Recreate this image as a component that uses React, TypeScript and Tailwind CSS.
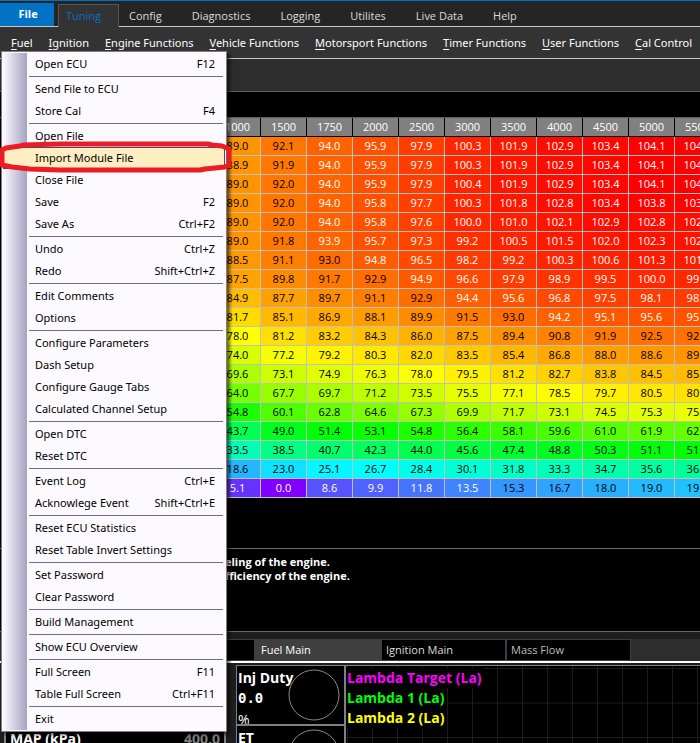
import React from "react";

const navTabs = ["Config", "Diagnostics", "Logging", "Utilites", "Live Data", "Help"];

const menuBar = [
  "Fuel",
  "Ignition",
  "Engine Functions",
  "Vehicle Functions",
  "Motorsport Functions",
  "Timer Functions",
  "User Functions",
  "Cal Control",
];

type Item = { label: string; keys?: string; active?: boolean };

const fileMenu: Item[][] = [
  [{ label: "Open ECU", keys: "F12" }],
  [{ label: "Send File to ECU" }, { label: "Store Cal", keys: "F4" }],
  [
    { label: "Open File" },
    { label: "Import Module File", active: true },
    { label: "Close File" },
    { label: "Save", keys: "F2" },
    { label: "Save As", keys: "Ctrl+F2" },
  ],
  [
    { label: "Undo", keys: "Ctrl+Z" },
    { label: "Redo", keys: "Shift+Ctrl+Z" },
  ],
  [{ label: "Edit Comments" }, { label: "Options" }],
  [
    { label: "Configure Parameters" },
    { label: "Dash Setup" },
    { label: "Configure Gauge Tabs" },
    { label: "Calculated Channel Setup" },
  ],
  [{ label: "Open DTC" }, { label: "Reset DTC" }],
  [
    { label: "Event Log", keys: "Ctrl+E" },
    { label: "Acknowlege Event", keys: "Shift+Ctrl+E" },
  ],
  [{ label: "Reset ECU Statistics" }, { label: "Reset Table Invert Settings" }],
  [{ label: "Set Password" }, { label: "Clear Password" }],
  [{ label: "Build Management" }],
  [{ label: "Show ECU Overview" }],
  [
    { label: "Full Screen", keys: "F11" },
    { label: "Table Full Screen", keys: "Ctrl+F11" },
  ],
  [{ label: "Exit" }],
];

const rpm = [1000, 1500, 1750, 2000, 2500, 3000, 3500, 4000, 4500, 5000, 5500];

const fuel: number[][] = [
  [89.0, 92.1, 94.0, 95.9, 97.9, 100.3, 101.9, 102.9, 103.4, 104.1, 104.1],
  [88.9, 91.9, 94.0, 95.9, 97.9, 100.3, 101.9, 102.9, 103.4, 104.1, 104.1],
  [89.0, 92.0, 94.0, 95.9, 97.9, 100.4, 101.9, 102.9, 103.4, 104.1, 104.1],
  [89.0, 92.0, 94.0, 95.8, 97.7, 100.3, 101.8, 102.8, 103.4, 103.8, 103.8],
  [89.0, 92.0, 94.0, 95.8, 97.6, 100.0, 101.0, 102.1, 102.9, 102.8, 102.8],
  [89.0, 91.8, 93.9, 95.7, 97.3, 99.2, 100.5, 101.5, 102.0, 102.3, 102.3],
  [88.5, 91.1, 93.0, 94.8, 96.5, 98.2, 99.2, 100.3, 100.6, 101.3, 101.3],
  [87.5, 89.8, 91.7, 92.9, 94.9, 96.6, 97.9, 98.9, 99.5, 100.0, 99.9],
  [84.9, 87.7, 89.7, 91.1, 92.9, 94.4, 95.6, 96.8, 97.5, 98.1, 98.1],
  [81.7, 85.1, 86.9, 88.1, 89.9, 91.5, 93.0, 94.2, 95.1, 95.6, 95.6],
  [78.0, 81.2, 83.2, 84.3, 86.0, 87.5, 89.4, 90.8, 91.9, 92.5, 92.5],
  [74.0, 77.2, 79.2, 80.3, 82.0, 83.5, 85.4, 86.8, 88.0, 88.6, 89.0],
  [69.6, 73.1, 74.9, 76.3, 78.0, 79.5, 81.2, 82.7, 83.8, 84.5, 85.0],
  [64.0, 67.7, 69.7, 71.2, 73.5, 75.5, 77.1, 78.5, 79.7, 80.5, 80.9],
  [54.8, 60.1, 62.8, 64.6, 67.3, 69.9, 71.7, 73.1, 74.5, 75.3, 75.9],
  [43.7, 49.0, 51.4, 53.1, 54.8, 56.4, 58.1, 59.6, 61.0, 61.9, 62.5],
  [33.5, 38.5, 40.7, 42.3, 44.0, 45.6, 47.4, 48.8, 50.3, 51.1, 51.8],
  [18.6, 23.0, 25.1, 26.7, 28.4, 30.1, 31.8, 33.3, 34.7, 35.6, 36.2],
  [5.1, 0.0, 8.6, 9.9, 11.8, 13.5, 15.3, 16.7, 18.0, 19.0, 19.7],
];

const stops = [
  [128, 0, 255],
  [0, 255, 255],
  [0, 255, 0],
  [255, 255, 0],
  [255, 0, 0],
];

function heat(v: number) {
  const t = Math.min(3.999, (v / 104.1) * 4);
  const i = Math.floor(t);
  const c = stops[i].map((a, k) => Math.round(a + (stops[i + 1][k] - a) * (t - i)));
  return `rgb(${c[0]}, ${c[1]}, ${c[2]})`;
}

function FileMenu() {
  return (
    <div
      role="menu"
      aria-label="File"
      className="absolute left-px top-[51px] z-10 flex w-[226px] border border-[#8a7b80] bg-[#fcfaff] p-px font-['Noto_Sans',sans-serif] text-black shadow-[3px_3px_3px_rgba(0,0,0,0.55)]"
    >
      <div className="w-6 bg-linear-to-r from-[#fcfaff] to-[#a5a3c0]" />
      <div className="-ml-6 flex-1">
        {fileMenu.map((group, g) => (
          <React.Fragment key={g}>
            {g > 0 && <div role="separator" className="my-px ml-[26px] mr-0.5 h-px bg-[#6d6d96]" />}
            {group.map((item) => (
              <button
                key={item.label}
                type="button"
                role="menuitem"
                className={
                  "flex h-[22px] w-full items-center justify-between border pl-[31px] pr-[9px] " +
                  (item.active ? "border-[#4b4b6f] bg-[#ffeec2]" : "border-transparent")
                }
              >
                <span>{item.label}</span>
                <span>{item.keys}</span>
              </button>
            ))}
          </React.Fragment>
        ))}
      </div>
    </div>
  );
}

function FuelTable() {
  return (
    <div className="overflow-hidden border-t border-[#5e5e5e] pl-[215px]">
      <table className="w-[506px] table-fixed border-separate border-spacing-0 text-center">
        <thead>
          <tr>
            {rpm.map((r) => (
              <th
                key={r}
                className="h-[19px] border-b border-r border-black bg-[#808080] p-0 font-normal leading-[18px] text-white"
              >
                {r}
              </th>
            ))}
          </tr>
        </thead>
        <tbody>
          {fuel.map((row, y) => (
            <tr key={y}>
              {row.map((v, x) => (
                <td
                  key={x}
                  style={{ background: heat(v) }}
                  className={
                    "h-[19px] border-b border-r border-[#c0c0c0] p-0 leading-[18px] " +
                    (v > 93.4 || v < 14 ? "text-white" : "text-black")
                  }
                >
                  {v.toFixed(1)}
                </td>
              ))}
            </tr>
          ))}
        </tbody>
      </table>
    </div>
  );
}

function Gauge({ name, value, unit }: { name: string; value: string; unit: string }) {
  return (
    <div className="relative h-[60px] overflow-hidden border-b-2 border-[#808080] pl-px">
      <svg className="absolute right-1 top-[3px]" width="52" height="52">
        <circle cx="26" cy="26" r="25" fill="none" stroke="#8a8a8a" />
      </svg>
      <div className="relative text-sm font-bold leading-6">{name}</div>
      <div className="font-['DejaVu_Sans_Mono',monospace] text-sm font-bold leading-4">{value}</div>
      <div className="text-sm leading-7">{unit}</div>
    </div>
  );
}

function Chart() {
  return (
    <div className="relative flex-1 overflow-hidden border-l border-t border-[#808080] bg-black">
      <svg className="absolute inset-0 h-full w-full">
        <defs>
          <pattern id="grid" x="1" y="2" width="25" height="34.5" patternUnits="userSpaceOnUse">
            <path d="M.5 0V34.5M0 .5H25" stroke="#1c1c1c" />
          </pattern>
        </defs>
        <rect width="100%" height="100%" fill="url(#grid)" />
      </svg>
      <div className="relative flex flex-col items-start pt-0.5 text-sm font-bold leading-5">
        <span className="bg-black px-px text-[#ff00ff]">Lambda Target (La)</span>
        <span className="bg-black px-px text-[#00ff00]">Lambda 1 (La)</span>
        <span className="bg-black px-px text-[#ffff00]">Lambda 2 (La)</span>
      </div>
    </div>
  );
}

export default function App() {
  return (
    <div className="relative flex h-screen w-full flex-col overflow-hidden whitespace-nowrap bg-black font-['Open_Sans','Noto_Sans',sans-serif] text-[11px] text-white">
      <header className="flex h-[27px] shrink-0 items-stretch border-t border-[#0072c6] bg-[#252525]">
        <div className="flex border-b border-[#c8c8c8] pr-1 pt-0.5">
          <button type="button" className="w-[54px] bg-[#0072c6] pl-0.5 pb-px font-bold">
            File
          </button>
        </div>
        <button
          type="button"
          className="mt-[3px] w-[61px] border border-b-0 border-[#555555] bg-[#333333] pr-2.5 text-[#0a6fc8]"
        >
          Tuning
        </button>
        <nav className="flex flex-1 gap-[30px] border-b border-[#c8c8c8] pl-2.5 pt-1.5 text-[#dcdcdc]">
          {navTabs.map((t) => (
            <button key={t} type="button">
              {t}
            </button>
          ))}
        </nav>
      </header>

      <nav className="flex h-8 shrink-0 items-center gap-4 border-b border-[#c8c8c8] bg-[#333333] pl-[11px] pt-px font-['Noto_Sans',sans-serif]">
        {menuBar.map((m) => (
          <button key={m} type="button">
            <span className="underline underline-offset-2">{m[0]}</span>
            {m.slice(1)}
          </button>
        ))}
      </nav>

      <div className="h-[33px] shrink-0 border-b border-[#5e5e5e] bg-[#2d2d2d]" />
      <div className="h-[25px] shrink-0" />
      <FuelTable />

      <div className="mt-[50px] h-[84px] shrink-0 border-y border-[#6a6a6a] pl-[225px] pt-1.5 font-bold leading-[14px]">
        <p>eling of the engine.</p>
        <p>fficiency of the engine.</p>
      </div>

      <div className="h-[7px] shrink-0 bg-[#1e1e1e]" />
      <div className="flex h-[22px] shrink-0 bg-[#2d2d2d] pl-[130px]">
        <button type="button" className="w-[125px] border border-[#3f3f3f] bg-black" aria-label="Table" />
        <button type="button" className="w-[126px] bg-[#3f3f3f] pl-1.5 text-left">
          Fuel Main
        </button>
        <button type="button" className="w-[125px] border border-[#3f3f3f] bg-black pl-1 text-left text-[#dcdcdc]">
          Ignition Main
        </button>
        <button type="button" className="w-[125px] border border-[#3f3f3f] bg-black pl-1 text-left text-[#bdbdbd]">
          Mass Flow
        </button>
      </div>

      <div className="flex min-h-0 flex-1 border-t-2 border-white bg-[#1e1e1e] pt-0.5">
        <section className="ml-1 mr-2.5 flex w-[222px] items-end justify-between overflow-hidden border-2 border-b-0 border-[#808080] bg-black px-1 text-sm font-bold leading-3">
          <span className="h-2.5">MAP (kPa)</span>
          <span className="h-2.5 text-[#808080]">400.0</span>
        </section>
        <section className="w-[109px] shrink-0 overflow-hidden border-x border-t border-[#808080] bg-black">
          <Gauge name="Inj Duty" value="0.0" unit="%" />
          <Gauge name="ET" value="0" unit="F" />
        </section>
        <Chart />
      </div>

      <FileMenu />

      <svg className="pointer-events-none absolute left-0 top-[138px] z-20" width="236" height="38">
        <path
          d="M2 12L6 10L20 8L24 7L60 6H208L212 7L222 8L227 10L229 12V27L225 29L205 31L200 32H60L30 31L12 29L2 27Z"
          fill="none"
          stroke="#ed1c24"
          strokeWidth="5"
          strokeLinejoin="round"
        />
      </svg>
    </div>
  );
}
